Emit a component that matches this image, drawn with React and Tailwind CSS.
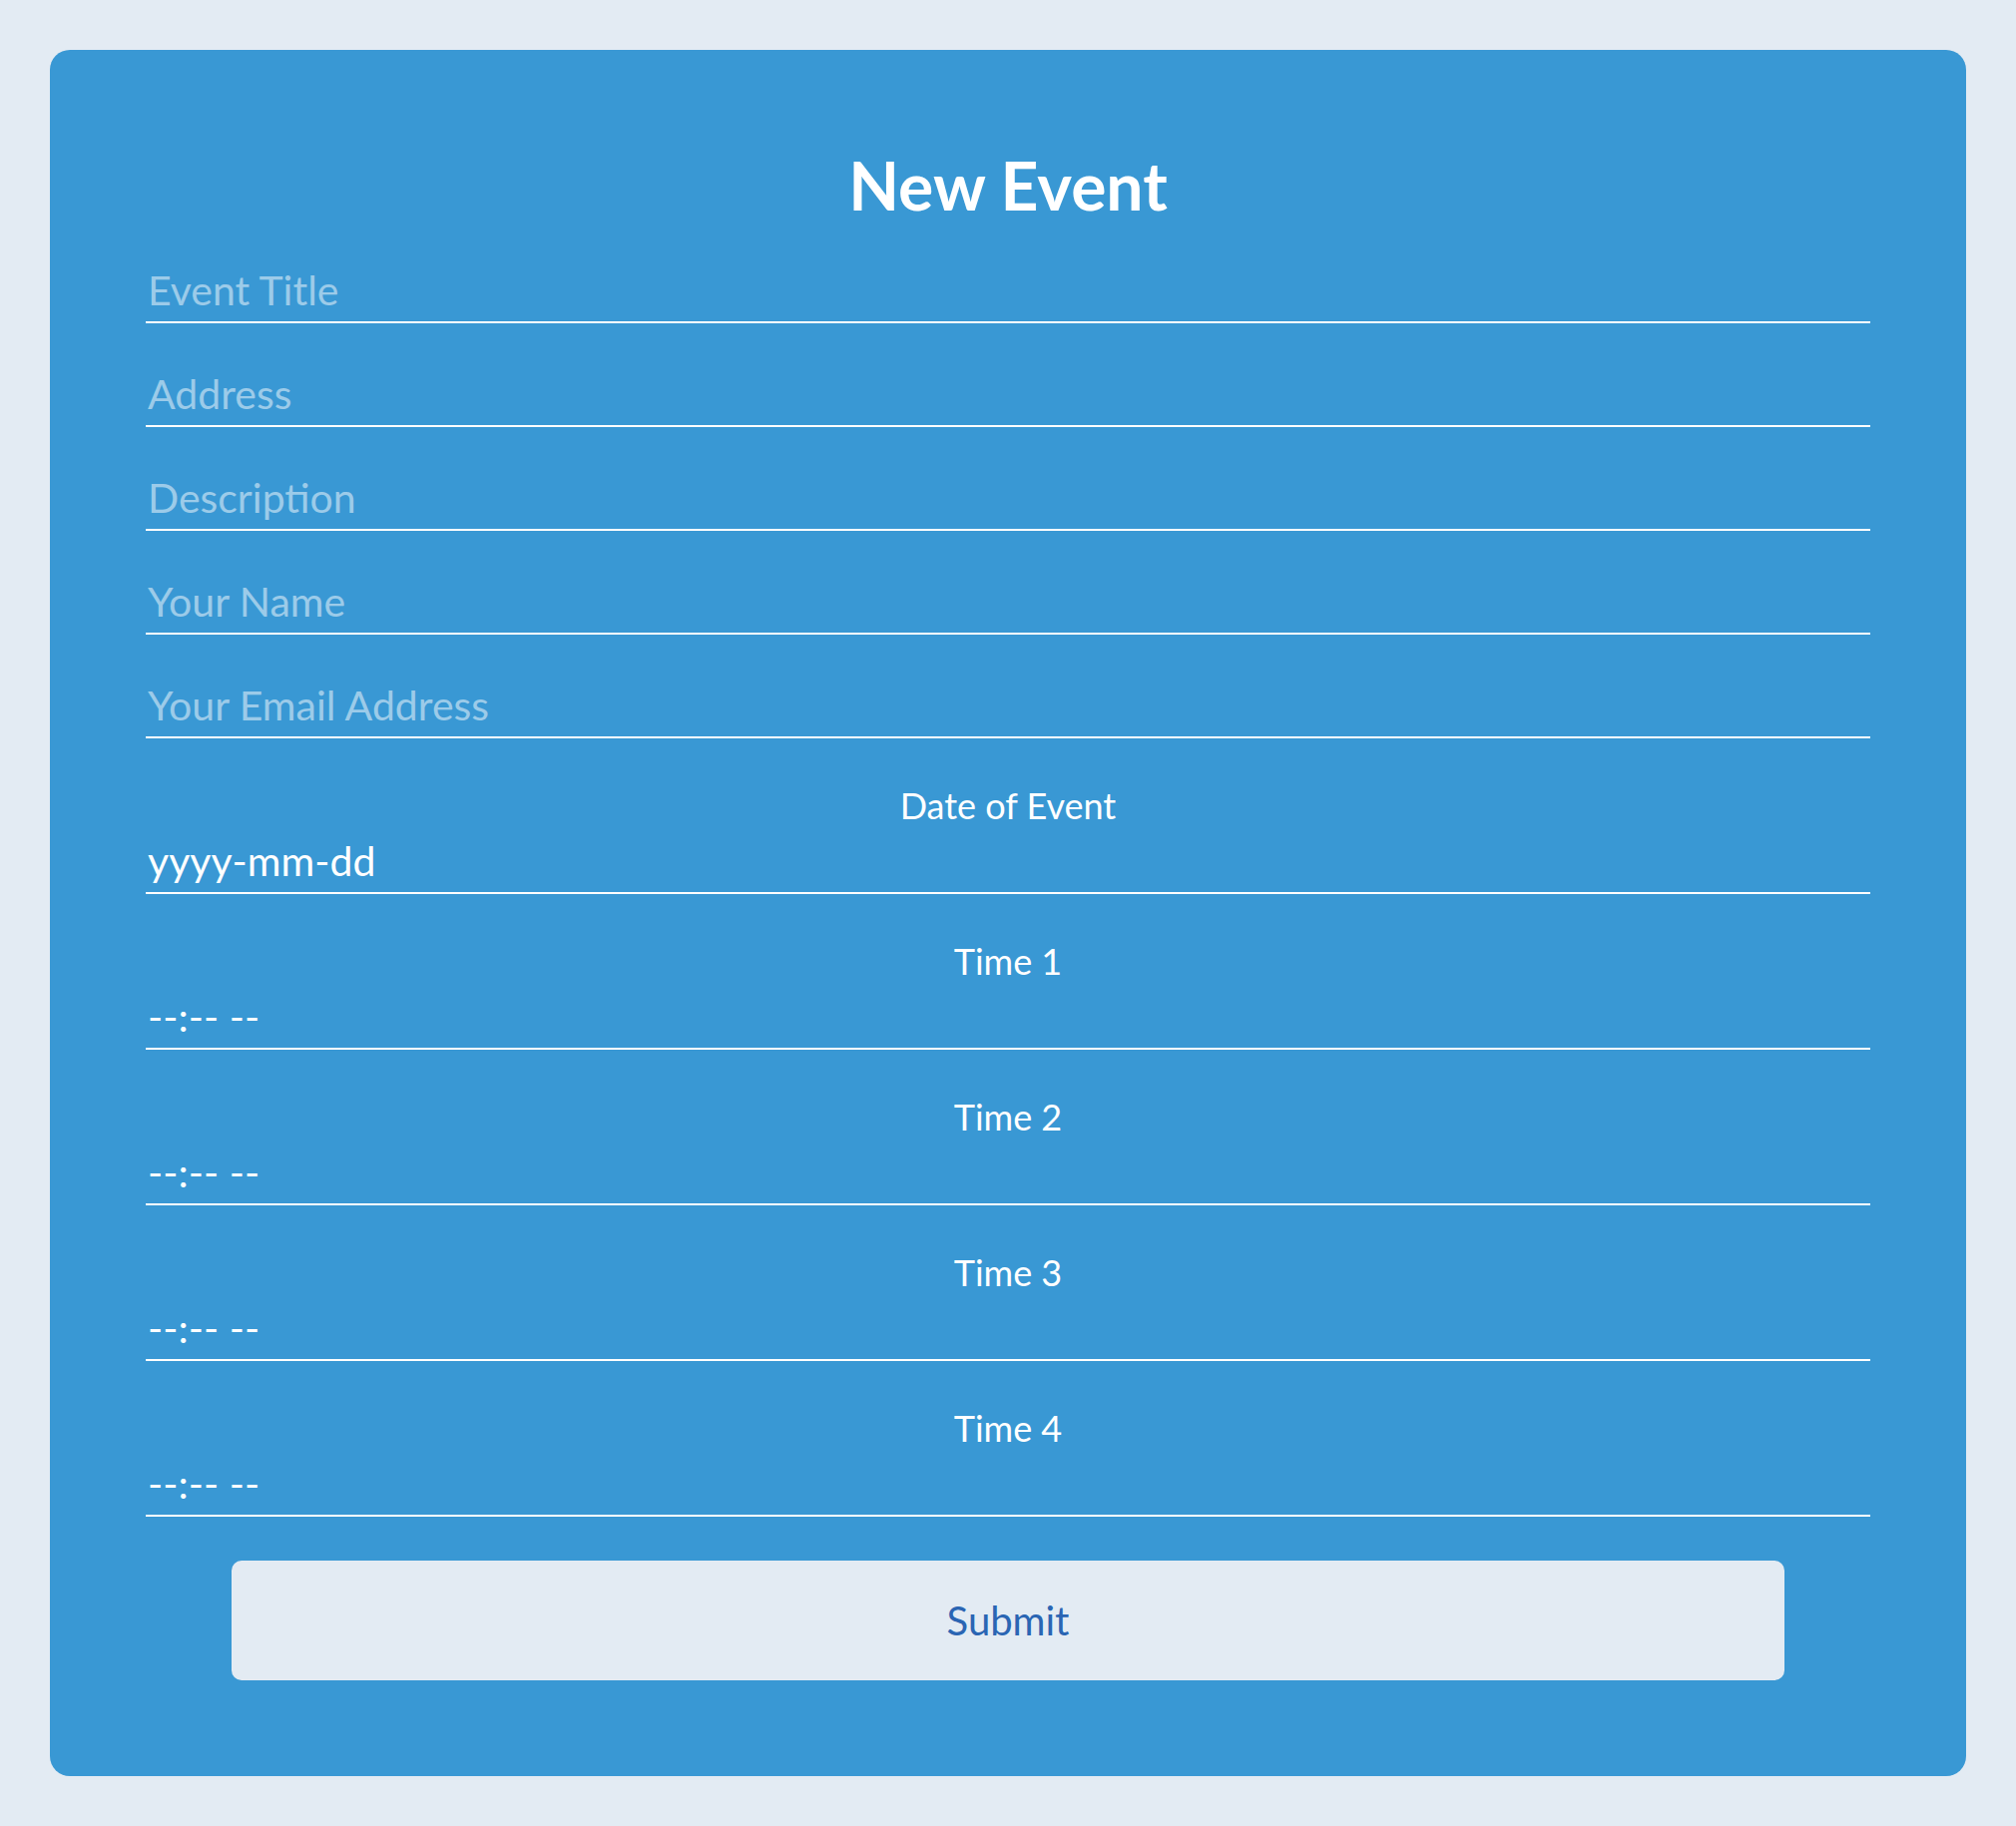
import { useState } from "react";

const textFields = [
  { name: "title", placeholder: "Event Title" },
  { name: "address", placeholder: "Address" },
  { name: "description", placeholder: "Description" },
  { name: "name", placeholder: "Your Name" },
  { name: "email", placeholder: "Your Email Address" },
];

const pickedFields = [
  { name: "date", label: "Date of Event", placeholder: "yyyy-mm-dd" },
  { name: "time1", label: "Time 1", placeholder: "--:-- --" },
  { name: "time2", label: "Time 2", placeholder: "--:-- --" },
  { name: "time3", label: "Time 3", placeholder: "--:-- --" },
  { name: "time4", label: "Time 4", placeholder: "--:-- --" },
];

export default function App() {
  const [values, setValues] = useState({});

  const update = (name) => (e) =>
    setValues((prev) => ({ ...prev, [name]: e.target.value }));

  const handleSubmit = (e) => {
    e.preventDefault();
  };

  return (
    <div className="min-h-screen bg-[#e3ebf3] p-[50px] font-['Lato',sans-serif]">
      <form
        onSubmit={handleSubmit}
        className="bg-[#3998d4] rounded-[20px] px-[96px] pt-[103px] pb-[96px] flex flex-col"
      >
        <h1 className="text-white text-center font-bold text-[66px] leading-none mb-[40px]">
          New Event
        </h1>

        {/* plain text inputs */}
        <div className="flex flex-col gap-[39px]">
          {textFields.map((f) => (
            <input
              key={f.name}
              type="text"
              placeholder={f.placeholder}
              value={values[f.name] || ""}
              onChange={update(f.name)}
              className="w-full h-[65px] bg-transparent border-b-2 border-white pl-[2px] text-[41px] text-white placeholder:text-white/50 outline-none"
            />
          ))}
        </div>

        {/* date + times */}
        {pickedFields.map((f) => (
          <div key={f.name} className="flex flex-col mt-[49px]">
            <label
              htmlFor={f.name}
              className="text-white text-center text-[36px] leading-none mb-[6px]"
            >
              {f.label}
            </label>
            <input
              id={f.name}
              type="text"
              placeholder={f.placeholder}
              value={values[f.name] || ""}
              onChange={update(f.name)}
              className="w-full h-[65px] bg-transparent border-b-2 border-white pl-[2px] text-[41px] text-white placeholder:text-white outline-none"
            />
          </div>
        ))}

        <button
          type="submit"
          className="mt-[44px] mx-auto w-[90%] h-[120px] rounded-[10px] bg-[#e3ebf3] text-[#2a65b3] text-[40px]"
        >
          Submit
        </button>
      </form>
    </div>
  );
}
